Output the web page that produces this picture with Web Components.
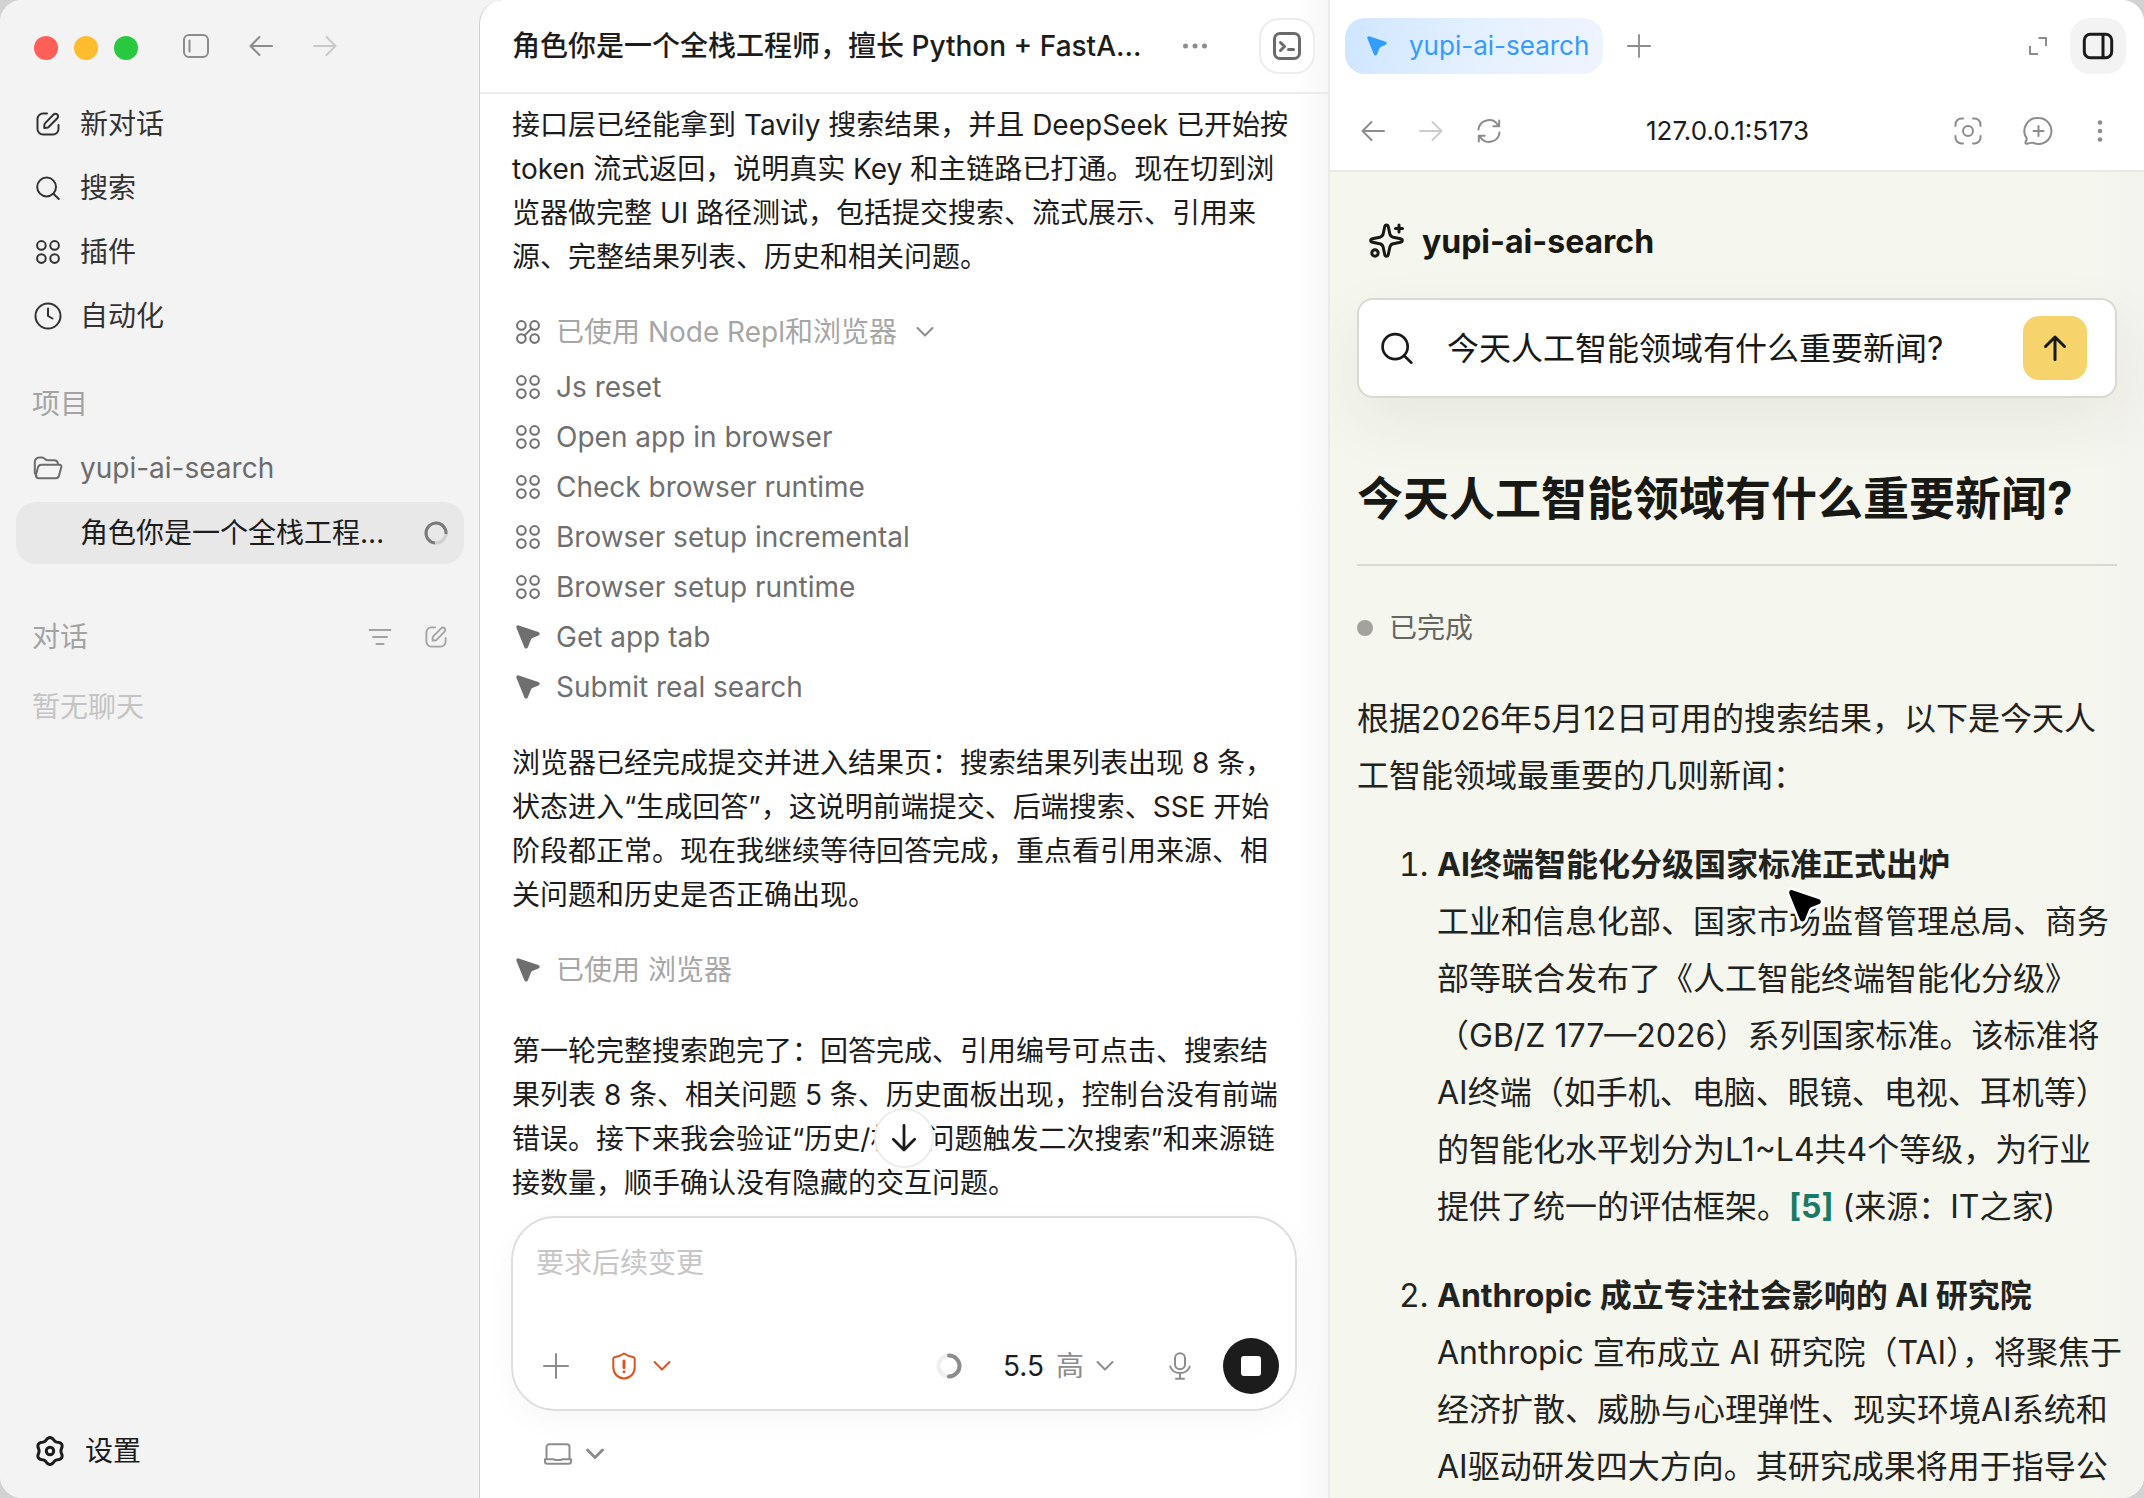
<!DOCTYPE html>
<html lang="zh-CN">
<head>
<meta charset="utf-8">
<title>yupi-ai-search</title>
<style>
    html, body {
        height: 100%;
        margin: 0;
    }
    body {
        background: #d2d2d2;
        color: #1c1c1c;
        font-family: Inter, "Noto Sans CJK SC", sans-serif;
        font-size: 28px;
        line-height: 44px;
    }
</style>
</head>
<body>

<app-window>
    <side-bar slot="sidebar">
        <nav-item icon="edit">新对话</nav-item>
        <nav-item icon="search">搜索</nav-item>
        <nav-item icon="grid">插件</nav-item>
        <nav-item icon="clock">自动化</nav-item>
        <nav-item slot="projects" icon="folder" muted>yupi-ai-search</nav-item>
        <nav-item slot="projects" selected>角色你是一个全栈工程师，擅长 Python</nav-item>
    </side-bar>

    <chat-panel slot="chat">
        <span slot="title">角色你是一个全栈工程师，擅长 Python + FastAPI 开发</span>
        <chat-message>接口层已经能拿到 Tavily 搜索结果，并且 DeepSeek 已开始按 token 流式返回，说明真实 Key 和主链路已打通。现在切到浏览器做完整 UI 路径测试，包括提交搜索、流式展示、引用来源、完整结果列表、历史和相关问题。</chat-message>
        <tool-group icon="linked" label="已使用 Node Repl和浏览器" open>
            <tool-step icon="grid">Js reset</tool-step>
            <tool-step icon="grid">Open app in browser</tool-step>
            <tool-step icon="grid">Check browser runtime</tool-step>
            <tool-step icon="grid">Browser setup incremental</tool-step>
            <tool-step icon="grid">Browser setup runtime</tool-step>
            <tool-step icon="cursor">Get app tab</tool-step>
            <tool-step icon="cursor">Submit real search</tool-step>
        </tool-group>
        <chat-message>浏览器已经完成提交并进入结果页：搜索结果列表出现 8 条，状态进入“生成回答”，这说明前端提交、后端搜索、SSE 开始阶段都正常。现在我继续等待回答完成，重点看引用来源、相关问题和历史是否正确出现。</chat-message>
        <tool-group icon="cursor" label="已使用 浏览器"></tool-group>
        <chat-message>第一轮完整搜索跑完了：回答完成、引用编号可点击、搜索结果列表 8 条、相关问题 5 条、历史面板出现，控制台没有前端错误。接下来我会验证“历史/相关问题触发二次搜索”和来源链接数量，顺手确认没有隐藏的交互问题。</chat-message>
    </chat-panel>

    <browser-panel slot="browser" tab="yupi-ai-search" address="127.0.0.1:5173">
        <search-page query="今天人工智能领域有什么重要新闻?"></search-page>
    </browser-panel>
</app-window>

<script>
// outline of the six-lobed settings wheel
function gearPath(center, radius, depth) {
    const points = [];
    for (let deg = 0; deg < 360; deg += 5) {
        const a = deg * Math.PI / 180;
        const r = radius + depth * Math.cos(6 * a);
        points.push((center + r * Math.sin(a)).toFixed(2) + ' ' + (center - r * Math.cos(a)).toFixed(2));
    }
    return 'M' + points.join('L') + 'Z';
}

const CURSOR = 'M2.7.4 22.3 7c1.8.7 1.9 2.8.2 3.5l-5.6 2.3c-1 .4-1.7 1.1-2.1 2.1l-2.9 7.3c-.7 1.7-2.9 1.7-3.6 0L.5 3C-.1 1.2 1.1-.1 2.7.4z';
const DOTS4 = '<circle cx="5.4" cy="5.4" r="4.3"/><circle cx="18.6" cy="5.4" r="4.3"/><circle cx="5.4" cy="18.6" r="4.3"/><circle cx="18.6" cy="18.6" r="4.3"/>';

// name: [width, height, markup]
const ICONS = {
    edit: [24, 24, '<path d="M11 1.5H7A5.5 5.5 0 0 0 1.5 7v10A5.5 5.5 0 0 0 7 22.5h10a5.5 5.5 0 0 0 5.5-5.5v-4"/><path d="M8.3 15.9v-2.5c0-.9.3-1.7.9-2.3l8.4-8.6a2.5 2.5 0 0 1 3.7 0 2.5 2.5 0 0 1 0 3.7l-8.4 8.6c-.6.7-1.4 1-2.3 1z"/>'],
    search: [24, 24, '<circle cx="10.6" cy="11" r="9.4"/><path d="M17.4 17.8 22.8 23"/>'],
    grid: [24, 24, DOTS4],
    linked: [24, 24, DOTS4 + '<path d="M8.4 15.6 15.6 8.4"/>'],
    clock: [28, 28, '<circle cx="14" cy="14" r="12.5"/><path d="M14 6.5V14l4.5 2.5"/>'],
    folder: [30, 24, '<path d="M3.5 20 1.8 17V6a4.5 4.5 0 0 1 4.5-4.5h2.5c3.2 0 3.2 2.7 6.2 2.7h5.8c2.7 0 4.2 1.8 4.2 4.3"/><path d="M8.3 8.7h18.2c1.4 0 2.1 1 1.8 2.3l-2.3 8.7c-.4 1.5-1.6 2.5-3.2 2.5H5.8c-2 0-3.2-1.4-2.9-3.3l2.2-7.8c.5-1.6 1.5-2.4 3.2-2.4z"/>'],
    gear: [30, 30, '<path d="' + gearPath(15, 12.2, 1.3) + '"/><circle cx="15" cy="15" r="3.7"/>'],
    sidebar: [26, 24, '<rect x="1" y="1" width="24" height="22" rx="5"/><path d="M6.5 6.5v11"/>'],
    panel: [30, 26, '<rect x="1.3" y="1.3" width="27.4" height="23.4" rx="6"/><path d="M20 1.5v23"/>'],
    back: [24, 20, '<path d="M23 10H1.5M10.5 1 1.5 10l9 9"/>'],
    forward: [24, 20, '<path d="M1 10h21.5M13.5 1l9 9-9 9"/>'],
    up: [26, 26, '<path d="M13 24.5V2M3.5 11.5 13 2l9.5 9.5"/>'],
    down: [28, 30, '<path d="M14 1.5V28M2.5 16.5 14 28l11.5-11.5"/>'],
    chevron: [18, 12, '<path d="m1.5 2 7.5 7.500L16.5 2"/>'],
    filter: [24, 18, '<path d="M1.5 2h21M5 9h14M8.5 16h7"/>'],
    more: [24, 6, '<g fill="currentColor" stroke="none"><circle cx="2.5" cy="3" r="2.5"/><circle cx="12" cy="3" r="2.5"/><circle cx="21.5" cy="3" r="2.5"/></g>'],
    kebab: [6, 22, '<g fill="currentColor" stroke="none"><circle cx="3" cy="2.5" r="2.3"/><circle cx="3" cy="11" r="2.3"/><circle cx="3" cy="19.5" r="2.3"/></g>'],
    terminal: [28, 28, '<rect x="1.5" y="1.5" width="25" height="25" rx="5.5"/><path d="m7.5 10.5 4 4-4 4M15.5 17.5h5"/>'],
    plus: [26, 26, '<path d="M13 1v24M1 13h24"/>'],
    expand: [18, 18, '<path stroke-linecap="butt" d="M9.5 1H17v8M1 9v8h8"/>'],
    reload: [24, 24, '<path d="M1.5 10.5A10.5 10.5 0 0 1 20.8 6M22.2 1.5v5.7h-5.9M22.5 13.5A10.5 10.5 0 0 1 3.2 18M1.8 22.5v-5.7h5.9"/>'],
    capture: [28, 28, '<path d="M9 1.5H7.5a6 6 0 0 0-6 6V9M19 1.5h1.5a6 6 0 0 1 6 6V9M9 26.5H7.5a6 6 0 0 1-6-6V19M19 26.5h1.5a6 6 0 0 0 6-6V19"/><circle cx="14" cy="14" r="5"/>'],
    comment: [30, 28, '<path d="M15.5 1a13 13 0 1 1-5.3 24.9c-1-.4-1.6-.3-2.6 0l-3.7.9c-1.2.3-1.7-.6-1.3-1.6l.9-2.3c.3-.8.2-1.4-.2-2.2A13 13 0 0 1 15.5 1z"/><path d="M15.5 9v10M10.5 14h10"/>'],
    sparkle: [34, 34, '<path d="M14.7 2.8c.5-2.4 3.1-2.4 3.6 0l1.5 6.9c.4 1.9 1.6 3 3.5 3.5l7.2 1.5c2.4.5 2.4 3.1 0 3.6l-7.2 1.5c-1.9.4-3.1 1.6-3.5 3.5l-1.5 7.2c-.5 2.4-3.1 2.4-3.6 0l-1.5-7.2c-.4-1.9-1.6-3.1-3.5-3.5l-7.2-1.5c-2.4-.5-2.4-3.1 0-3.6l7.2-1.5c1.9-.5 3.1-1.6 3.5-3.5z"/><path d="M29 1v7M25.5 4.5h7"/><circle cx="5" cy="29" r="3.2"/>'],
    cursor: [24, 24, '<path fill="currentColor" stroke="none" d="' + CURSOR + '"/>'],
    pointer: [28, 28, '<path fill="#000" stroke="#fff" stroke-width="4" paint-order="stroke" transform="translate(2 2)" d="' + CURSOR + '"/>'],
    shield: [26, 28, '<path d="M13 1.5c2.5 1.8 5.5 2.9 9 3.4 1 .2 1.7.9 1.7 1.9V15c0 6.5-4.2 11-10.7 11.5C6.5 26 2.3 21.5 2.3 15V6.8c0-1 .7-1.7 1.7-1.9 3.5-.5 6.5-1.6 9-3.4z"/><path d="M13 9v6.5M13 19.7v.1" stroke-width="3"/>'],
    ring: [24, 24, '<circle cx="12" cy="12" r="10.5" stroke="#eee"/><path d="M12 1.5a10.5 10.5 0 0 1 0 21"/>'],
    spinner: [24, 24, '<circle cx="12" cy="12" r="10" stroke="#cfcfcf"/><path stroke-linecap="butt" d="M11 22A10 10 0 1 1 22 13"/>'],
    mic: [22, 28, '<rect x="6" y="1.2" width="10" height="16" rx="5"/><path d="M1.2 14.5c1.7 4.4 5.3 6.5 9.8 6.5s8.1-2.1 9.8-6.5M11 21v5.5M7 26.7h8"/>'],
    laptop: [28, 22, '<path d="M2.5 15.5V4a2.7 2.7 0 0 1 2.7-2.7h17.6A2.7 2.7 0 0 1 25.5 4v11.5M1 16.2h8.5c.8 0 1.2.9 2 .9h5c.8 0 1.2-.9 2-.9H27v2.3c0 1.5-.9 2.3-2.3 2.3H3.3C1.9 20.800 1 20 1 18.500z"/>']
};

class UiIcon extends HTMLElement {

    connectedCallback() {
        const [width, height, markup] = ICONS[this.getAttribute('name')];
        const stroke = this.getAttribute('stroke') || 2;

        this.attachShadow({ mode: 'open' });
        this.shadowRoot.innerHTML = `
            <style>
                :host { display: inline-flex; flex: none; }
                svg { display: block; overflow: visible; }
            </style>
            <svg width="${this.getAttribute('width') || width}" viewBox="0 0 ${width} ${height}" fill="none"
                stroke="currentColor" stroke-width="${stroke}" stroke-linecap="round" stroke-linejoin="round"
                aria-hidden="true">${markup}</svg>
        `;
    }

}

const BUTTON_RESET = `
    button {
        display: flex;
        align-items: center;
        justify-content: center;
        margin: 0;
        padding: 0;
        border: 0;
        background: none;
        color: inherit;
        font: inherit;
        line-height: inherit;
    }
`;

class AppWindow extends HTMLElement {

    connectedCallback() {
        this.attachShadow({ mode: 'open' });
        this.shadowRoot.innerHTML = `
            <style>
                :host {
                    display: grid;
                    grid-template-columns: 480px minmax(0, 53fr) minmax(0, 51fr);
                    grid-template-rows: minmax(0, 1fr);
                    height: 100vh;
                    overflow: hidden;
                    border-radius: 22px;
                    background: #f3f3f3;
                }
            </style>
            <slot name="sidebar"></slot>
            <slot name="chat"></slot>
            <slot name="browser"></slot>
        `;
    }

}

class NavItem extends HTMLElement {

    connectedCallback() {
        const icon = this.getAttribute('icon');
        const selected = this.hasAttribute('selected');

        this.attachShadow({ mode: 'open' });
        this.shadowRoot.innerHTML = `
            <style>
                ${BUTTON_RESET}
                :host { display: block; color: #333; }
                :host([muted]) { color: #6c6c6c; }
                :host([selected]) { color: #1c1c1c; padding: 2px 0 1px; }
                button {
                    width: 100%;
                    height: 64px;
                    padding: 0 16px;
                    gap: 16px;
                    text-align: left;
                }
                :host([selected]) button {
                    height: 62px;
                    border-radius: 20px;
                    background: #e8e8e8;
                }
                .icon {
                    display: flex;
                    flex: none;
                    justify-content: center;
                    width: 32px;
                }
                .label {
                    flex: 1;
                    overflow: hidden;
                    white-space: nowrap;
                    text-overflow: ellipsis;
                }
                :host([selected]) .label { margin-right: 16px; }
                ui-icon[name="spinner"] { color: #7a7a7a; }
            </style>
            <button type="button">
                <span class="icon">${icon ? `<ui-icon name="${icon}"></ui-icon>` : ''}</span>
                <span class="label"><slot></slot></span>
                ${selected ? '<ui-icon name="spinner" width="24" stroke="3"></ui-icon>' : ''}
            </button>
        `;
    }

}

class SideBar extends HTMLElement {

    connectedCallback() {
        this.attachShadow({ mode: 'open' });
        this.shadowRoot.innerHTML = `
            <style>
                ${BUTTON_RESET}
                :host {
                    display: flex;
                    flex-direction: column;
                    box-sizing: border-box;
                    padding: 0 16px 15px;
                    background: #f3f3f3;
                }
                .top {
                    display: flex;
                    align-items: center;
                    height: 92px;
                    padding-left: 18px;
                    gap: 40px;
                    color: #8c8c8c;
                }
                .lights { display: flex; gap: 16px; margin-right: 5px; padding-top: 3px; }
                .lights span { width: 24px; height: 24px; border-radius: 50%; }
                .close { background: #ff5f57; }
                .minimize { background: #febc2e; }
                .zoom { background: #28c840; }
                .next { color: #c8c8c8; }
                h2 {
                    display: flex;
                    align-items: center;
                    height: 64px;
                    margin: 24px 17px 0 16px;
                    gap: 33px;
                    color: #a3a3a3;
                    font-size: 28px;
                    font-weight: 400;
                }
                h2 span { flex: 1; }
                h2.chats { margin-top: 40px; }
                p { margin: 16px 16px 0; color: #c4c4c4; }
                .settings { margin-top: auto; justify-content: start; height: 64px; padding: 0 19px; gap: 20px; }
            </style>
            <div class="top">
                <div class="lights">
                    <span class="close"></span><span class="minimize"></span><span class="zoom"></span>
                </div>
                <button type="button" aria-label="切换边栏"><ui-icon name="sidebar"></ui-icon></button>
                <button type="button" aria-label="后退"><ui-icon name="back"></ui-icon></button>
                <button type="button" class="next" aria-label="前进"><ui-icon name="forward"></ui-icon></button>
            </div>
            <nav>
                <slot></slot>
                <h2><span>项目</span></h2>
                <slot name="projects"></slot>
                <h2 class="chats">
                    <span>对话</span>
                    <button type="button" aria-label="筛选"><ui-icon name="filter"></ui-icon></button>
                    <button type="button" aria-label="新对话"><ui-icon name="edit" width="22"></ui-icon></button>
                </h2>
                <p>暂无聊天</p>
            </nav>
            <button type="button" class="settings"><ui-icon name="gear" stroke="3"></ui-icon>设置</button>
        `;
    }

}

class ChatMessage extends HTMLElement {

    connectedCallback() {
        this.attachShadow({ mode: 'open' });
        this.shadowRoot.innerHTML = `
            <style>
                :host { display: block; }
                p { margin: 0; }
            </style>
            <p><slot></slot></p>
        `;
    }

}

class ToolStep extends HTMLElement {

    connectedCallback() {
        this.attachShadow({ mode: 'open' });
        this.shadowRoot.innerHTML = `
            <style>
                :host {
                    display: flex;
                    align-items: center;
                    height: 50px;
                    gap: 16px;
                    color: #6f6f6f;
                }
            </style>
            <ui-icon name="${this.getAttribute('icon')}"></ui-icon>
            <span><slot></slot></span>
        `;
    }

}

class ToolGroup extends HTMLElement {

    connectedCallback() {
        this.attachShadow({ mode: 'open' });
        this.shadowRoot.innerHTML = `
            <style>
                ${BUTTON_RESET}
                :host { display: block; padding: 31px 4px 37px; }
                :host([open]) { padding-bottom: 29px; }
                button { height: 44px; gap: 16px; color: #a6a6a6; }
                button ui-icon:first-child { color: #6f6f6f; }
                button ui-icon[name="chevron"] { margin-left: 3px; color: #8c8c8c; }
                .steps { padding-top: 8px; }
                :host(:not([open])) .steps { display: none; }
            </style>
            <button type="button">
                <ui-icon name="${this.getAttribute('icon')}"></ui-icon>
                <span>${this.getAttribute('label')}</span>
                ${this.hasAttribute('open') ? '<ui-icon name="chevron"></ui-icon>' : ''}
            </button>
            <div class="steps"><slot></slot></div>
        `;
    }

}

class ChatComposer extends HTMLElement {

    connectedCallback() {
        this.attachShadow({ mode: 'open' });
        this.shadowRoot.innerHTML = `
            <style>
                ${BUTTON_RESET}
                :host { display: block; position: relative; }
                form {
                    border: 2px solid #dedede;
                    border-radius: 44px;
                    background: #fff;
                    box-shadow: 0 8px 32px rgba(0, 0, 0, .04);
                }
                textarea {
                    display: block;
                    box-sizing: border-box;
                    width: 100%;
                    height: 120px;
                    padding: 23px 23px 0;
                    border: 0;
                    outline: 0;
                    resize: none;
                    overflow: hidden;
                    background: none;
                    color: inherit;
                    font: inherit;
                    line-height: 44px;
                }
                textarea::placeholder { color: #c6c6c6; opacity: 1; }
                .tools {
                    display: flex;
                    align-items: center;
                    height: 56px;
                    padding: 0 16px 15px 30px;
                    color: #8c8c8c;
                }
                .access { gap: 16px; margin: 0 auto 0 42px; color: #d9541e; }
                .model { gap: 12px; margin: 0 55px 0 42px; }
                .model b { color: #1c1c1c; font-weight: 400; }
                .stop {
                    width: 56px;
                    height: 56px;
                    margin-left: 32px;
                    border-radius: 50%;
                    background: #1c1c1c;
                }
                .stop span { width: 20px; height: 20px; border-radius: 3px; background: #fff; }
                .jump {
                    position: absolute;
                    bottom: calc(100% + 48px);
                    left: 50%;
                    width: 60px;
                    height: 60px;
                    margin-left: -30px;
                    border: 2px solid #ececec;
                    border-radius: 50%;
                    box-sizing: border-box;
                    background: #fff;
                }
            </style>
            <button type="button" class="jump" aria-label="滚动到底部"><ui-icon name="down" width="26" stroke="3"></ui-icon></button>
            <form>
                <textarea aria-label="消息" placeholder="要求后续变更"></textarea>
                <div class="tools">
                    <button type="button" aria-label="添加"><ui-icon name="plus"></ui-icon></button>
                    <button type="button" class="access" aria-label="权限">
                        <ui-icon name="shield"></ui-icon><ui-icon name="chevron"></ui-icon>
                    </button>
                    <ui-icon name="ring" stroke="4"></ui-icon>
                    <button type="button" class="model"><b>5.5</b><span>高</span><ui-icon name="chevron"></ui-icon></button>
                    <button type="button" aria-label="语音"><ui-icon name="mic"></ui-icon></button>
                    <button type="button" class="stop" aria-label="停止"><span></span></button>
                </div>
            </form>
        `;
    }

}

class ChatPanel extends HTMLElement {

    connectedCallback() {
        this.attachShadow({ mode: 'open' });
        this.shadowRoot.innerHTML = `
            <style>
                ${BUTTON_RESET}
                :host {
                    display: flex;
                    flex-direction: column;
                    box-sizing: border-box;
                    min-width: 0;
                    margin-left: -1px;
                    border-left: 1px solid #cfcfcf;
                    border-top-left-radius: 24px;
                    background: linear-gradient(to left, #f7f7f7, #fff 32px);
                }
                header {
                    display: flex;
                    align-items: center;
                    box-sizing: border-box;
                    height: 94px;
                    padding: 0 13px 0 32px;
                    border-bottom: 2px solid #ebebeb;
                }
                h1 {
                    width: 632px;
                    margin: 0 auto 0 0;
                    overflow: hidden;
                    font-size: 28px;
                    font-weight: 500;
                    white-space: nowrap;
                    text-overflow: ellipsis;
                }
                .more { margin: 0 52px 0 0; color: #8c8c8c; }
                .terminal {
                    box-sizing: border-box;
                    width: 56px;
                    height: 56px;
                    border: 2px solid #ededed;
                    border-radius: 20px;
                    background: #fff;
                    color: #6a6a6a;
                }
                .log {
                    flex: 1;
                    min-height: 0;
                    overflow: hidden;
                    padding: 9px 37px 0 32px;
                }
                chat-composer { margin: 0 31px; }
                .where { align-self: start; height: 86px; gap: 14px; margin: 0 0 1px 64px; color: #8c8c8c; }
            </style>
            <header>
                <h1><slot name="title"></slot></h1>
                <button type="button" class="more" aria-label="更多"><ui-icon name="more"></ui-icon></button>
                <button type="button" class="terminal" aria-label="终端"><ui-icon name="terminal" stroke="3"></ui-icon></button>
            </header>
            <div class="log"><slot></slot></div>
            <chat-composer></chat-composer>
            <button type="button" class="where" aria-label="运行位置">
                <ui-icon name="laptop"></ui-icon><ui-icon name="chevron" stroke="3"></ui-icon>
            </button>
        `;
    }

}

class BrowserPanel extends HTMLElement {

    connectedCallback() {
        this.attachShadow({ mode: 'open' });
        this.shadowRoot.innerHTML = `
            <style>
                ${BUTTON_RESET}
                :host {
                    display: flex;
                    flex-direction: column;
                    min-width: 0;
                    border-left: 2px solid #ebebeb;
                    background: #fff;
                    font-size: 26px;
                }
                .tabs, .bar { display: flex; align-items: center; color: #8c8c8c; }
                .tabs { height: 92px; padding: 0 18px 0 15px; }
                .tab {
                    height: 56px;
                    padding: 0 14px 0 22px;
                    gap: 22px;
                    border-radius: 20px;
                    background: linear-gradient(100deg, #cfe6ff, #e6f1ff 55%, #eff4fe);
                    color: #339cff;
                }
                .add { margin: 0 auto 0 24px; }
                .panel {
                    width: 56px;
                    height: 56px;
                    margin-left: 23px;
                    border-radius: 20px;
                    background: #f3f3f3;
                    color: #1c1c1c;
                }
                .bar {
                    height: 78px;
                    padding: 0 41px 0 31px;
                    gap: 34px;
                    border-bottom: 2px solid #e9e9e6;
                }
                .next { color: #cdcdcd; }
                input {
                    flex: 1;
                    min-width: 0;
                    padding: 0;
                    border: 0;
                    outline: 0;
                    background: none;
                    color: #1c1c1c;
                    font: inherit;
                    text-align: center;
                }
                .shot { margin-right: 7px; }
                .kebab { margin-left: 10px; }
                main { flex: 1; min-height: 0; overflow: hidden; }
            </style>
            <div class="tabs">
                <button type="button" class="tab"><ui-icon name="cursor" width="20"></ui-icon>${this.getAttribute('tab')}</button>
                <button type="button" class="add" aria-label="新标签页"><ui-icon name="plus" width="24"></ui-icon></button>
                <button type="button" aria-label="展开"><ui-icon name="expand"></ui-icon></button>
                <button type="button" class="panel" aria-label="切换面板"><ui-icon name="panel" stroke="3"></ui-icon></button>
            </div>
            <div class="bar">
                <button type="button" aria-label="后退"><ui-icon name="back"></ui-icon></button>
                <button type="button" class="next" aria-label="前进"><ui-icon name="forward"></ui-icon></button>
                <button type="button" aria-label="刷新"><ui-icon name="reload"></ui-icon></button>
                <input type="text" aria-label="地址" value="${this.getAttribute('address')}">
                <button type="button" class="shot" aria-label="截图"><ui-icon name="capture"></ui-icon></button>
                <button type="button" aria-label="评论"><ui-icon name="comment"></ui-icon></button>
                <button type="button" class="kebab" aria-label="菜单"><ui-icon name="kebab"></ui-icon></button>
            </div>
            <main><slot></slot></main>
        `;
    }

}

class SearchPage extends HTMLElement {

    connectedCallback() {
        const query = this.getAttribute('query');

        this.attachShadow({ mode: 'open' });
        this.shadowRoot.innerHTML = `
            <style>
                ${BUTTON_RESET}
                :host {
                    display: block;
                    position: relative;
                    box-sizing: border-box;
                    min-height: 100%;
                    padding: 45px 27px 0;
                    background: linear-gradient(to left, #f3f2ef, #f5f6ee 48px);
                    color: #22231f;
                    font-size: 32px;
                    line-height: 57px;
                }
                .brand {
                    display: flex;
                    align-items: center;
                    height: 48px;
                    padding-left: 13px;
                    gap: 18px;
                    color: #181914;
                    font-weight: 700;
                }
                form {
                    display: flex;
                    align-items: center;
                    box-sizing: border-box;
                    height: 100px;
                    margin-top: 33px;
                    padding: 0 28px 0 22px;
                    border: 2px solid #d8d9d2;
                    border-radius: 16px;
                    background: #fff;
                    box-shadow: 0 24px 64px rgba(40, 42, 30, .07);
                    color: #181914;
                }
                input {
                    flex: 1;
                    min-width: 0;
                    margin-left: 34px;
                    padding: 0;
                    border: 0;
                    outline: 0;
                    background: none;
                    color: inherit;
                    font: inherit;
                }
                .go { width: 64px; height: 64px; border-radius: 16px; background: #f6d36b; }
                h1 {
                    margin: 72px 0 0;
                    padding-bottom: 38px;
                    border-bottom: 2px solid #d8d9d2;
                    color: #181914;
                    font-size: 46px;
                    font-weight: 700;
                    line-height: 56px;
                }
                .status {
                    display: flex;
                    align-items: center;
                    gap: 16px;
                    margin-top: 40px;
                    color: #65665f;
                    font-size: 28px;
                    line-height: 44px;
                }
                .status::before {
                    content: "";
                    width: 16px;
                    height: 16px;
                    border-radius: 50%;
                    background: #a3a29d;
                }
                p { margin: 40px 0 32px; }
                ol { margin: 0; padding-left: 80px; }
                li { margin-bottom: 32px; }
                .lead { white-space: nowrap; }
                a { color: #197a66; font-weight: 700; text-decoration: none; }
                .pointer { position: absolute; top: 715px; left: 456px; }
            </style>
            <div class="brand"><ui-icon name="sparkle" stroke="3"></ui-icon>yupi-ai-search</div>
            <form>
                <ui-icon name="search" width="32"></ui-icon>
                <input type="text" aria-label="搜索" value="${query}">
                <button type="button" class="go" aria-label="提交"><ui-icon name="up" stroke="3"></ui-icon></button>
            </form>
            <h1>${query}</h1>
            <div class="status">已完成</div>
            <p>根据2026年5月12日可用的搜索结果，以下是今天人工智能领域最重要的几则新闻：</p>
            <ol>
                <li><strong>AI终端智能化分级国家标准正式出炉</strong><br>工业和信息化部、国家市场监督管理总局、商务部等联合发布了《人工智能终端智能化分级》（GB/Z 177—2026）系列国家标准。该标准将AI终端（如手机、电脑、眼镜、电视、耳机等）的智能化水平划分为L1~L4共4个等级，为行业提供了统一的评估框架。<a href="#source-5">[5]</a> (来源：IT之家)</li>
                <li><strong>Anthropic 成立专注社会影响的 AI 研究院</strong><br><span class="lead">Anthropic 宣布成立 AI 研究院（TAI），将聚焦于</span>经济扩散、威胁与心理弹性、现实环境AI系统和AI驱动研发四大方向。其研究成果将用于指导公</li>
            </ol>
            <ui-icon class="pointer" name="pointer" width="38"></ui-icon>
        `;
    }

}

customElements.define('ui-icon', UiIcon);
customElements.define('nav-item', NavItem);
customElements.define('side-bar', SideBar);
customElements.define('chat-message', ChatMessage);
customElements.define('tool-step', ToolStep);
customElements.define('tool-group', ToolGroup);
customElements.define('chat-composer', ChatComposer);
customElements.define('chat-panel', ChatPanel);
customElements.define('browser-panel', BrowserPanel);
customElements.define('search-page', SearchPage);
customElements.define('app-window', AppWindow);
</script>
</body>
</html>
